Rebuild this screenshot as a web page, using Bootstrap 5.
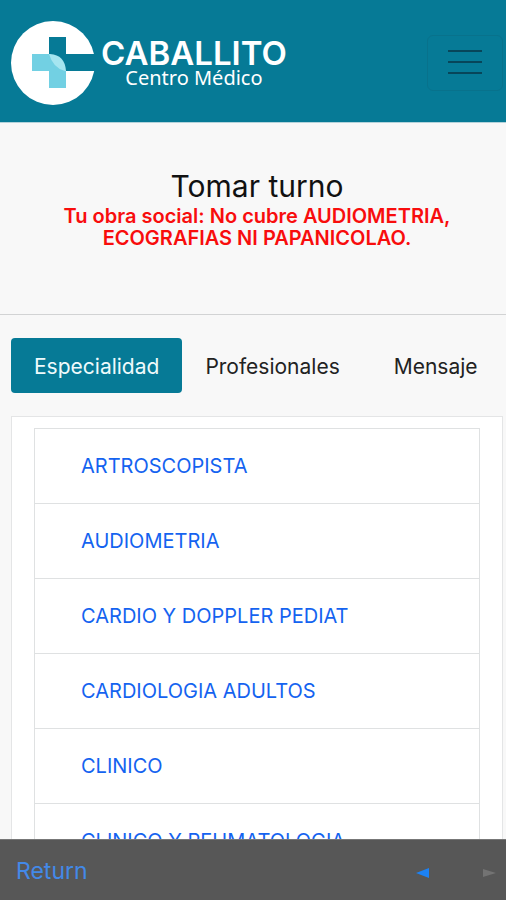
<!DOCTYPE html>
<html lang="es">
<head>
<meta charset="utf-8">
<meta name="viewport" content="width=device-width, initial-scale=1">
<title>Caballito Centro Médico - Tomar turno</title>
<link href="https://cdn.jsdelivr.net/npm/bootstrap@5.3.0/dist/css/bootstrap.min.css" rel="stylesheet">
<style>
  :root { --brand: #067a96; --line: #dfe1e2; }
  body { font-family: Inter, "Liberation Sans", sans-serif; background: #f8f8f8; color: #111; }
  .site-header { background: var(--brand); border-bottom: 1px solid #b4d3db; padding: 20px 3px 16px 10px; }
  .logo-icon { width: 86px; height: 86px; }
  .logo-text { margin-left: 5px; padding-top: 2px; }
  .logo-name { font-family: Inter, sans-serif; font-weight: 600; font-size: 33px; line-height: 28px; }
  .logo-sub { font-family: "Noto Sans", sans-serif; font-size: 20px; line-height: 22px; }
  .menu-btn { padding: 11px 20px; border: 1px solid #08728c; border-radius: 6px; }
  .menu-btn svg { width: 34px; height: 32px; }
  .intro { padding: 45px 44px 65px 52px; border-bottom: 1px solid #d2d3d4; }
  .intro h1 { font-size: 30px; line-height: 36px; font-weight: 400; }
  .notice { color: #f80d0d; font-size: 20px; line-height: 22px; font-weight: 600; padding-top: 1px; }
  .content-area { padding: 23px 3px 0 11px; }
  .nav-pills .nav-link { font-size: 21px; line-height: 33px; padding: 12px 23px 10px; color: #222; border-radius: 4px; }
  .nav-pills .nav-link.active { background: var(--brand); color: #eefafc; }
  .panel { border: 1px solid #e4e5e6; border-radius: 0; margin-top: 23px; padding: 11px 22px; }
  .specialties { --bs-list-group-border-color: var(--line); border-radius: 0; }
  .specialties .list-group-item { font-size: 20px; line-height: 30px; padding: 22px 46px; color: #1463f0; border-radius: 0; }
  .browser-bar { background: #575757; border-top: 1px solid #777; height: 61px; padding: 2px 10px 0 16px; }
  .return-btn { font-size: 23px; line-height: 30px; color: #4389e8; }
  .step-btn svg { width: 14px; height: 10px; }
</style>
<script src="https://cdn.jsdelivr.net/npm/bootstrap@5.3.0/dist/js/bootstrap.bundle.min.js"></script>
</head>
<body>
<div class="vh-100 d-flex flex-column">
  <div class="flex-grow-1 overflow-hidden">
    <header class="site-header d-flex align-items-center justify-content-between">
      <a href="#" class="d-flex align-items-center text-white text-decoration-none">
        <svg class="logo-icon" viewBox="0 0 86 86" aria-hidden="true">
          <circle cx="43" cy="43" r="42" fill="#fff"/>
          <path d="M39 17H56V34H86V51H56L39 34Z" fill="#067a96"/>
          <path d="M22 34H39V51H56V68H39V51H22Z" fill="#72d0e3"/>
          <path d="M39 34H40Q55 35 56 51H39Z" fill="#a5e5f0"/>
          <path d="M39 34V51H55Q43 48 39 34Z" fill="#72d0e3"/>
        </svg>
        <span class="logo-text d-flex flex-column align-items-center">
          <span class="logo-name">CABALLITO</span>
          <span class="logo-sub">Centro Médico</span>
        </span>
      </a>
      <button class="btn menu-btn d-flex" type="button" aria-label="Menú">
        <svg viewBox="0 0 34 32" stroke="#07465a" stroke-width="2" aria-hidden="true"><path d="M0 4H34M0 15H34M0 26H34"/></svg>
      </button>
    </header>
    <main>
      <section class="intro text-center">
        <h1 class="mb-0">Tomar turno</h1>
        <p class="notice mb-0">Tu obra social: No cubre AUDIOMETRIA, ECOGRAFIAS NI PAPANICOLAO.</p>
      </section>
      <section class="content-area">
        <ul class="nav nav-pills flex-nowrap" role="tablist">
          <li class="nav-item" role="presentation"><button class="nav-link active" type="button" role="tab" id="tab-esp" aria-controls="especialidad" aria-selected="true">Especialidad</button></li>
          <li class="nav-item" role="presentation"><button class="nav-link" type="button" role="tab" aria-selected="false">Profesionales</button></li>
          <li class="nav-item ms-2" role="presentation"><button class="nav-link" type="button" role="tab" aria-selected="false">Mensaje</button></li>
        </ul>
        <div class="card panel" id="especialidad" role="tabpanel" aria-labelledby="tab-esp">
          <div class="list-group specialties">
            <a href="#" class="list-group-item">ARTROSCOPISTA</a>
            <a href="#" class="list-group-item">AUDIOMETRIA</a>
            <a href="#" class="list-group-item">CARDIO Y DOPPLER PEDIAT</a>
            <a href="#" class="list-group-item">CARDIOLOGIA ADULTOS</a>
            <a href="#" class="list-group-item">CLINICO</a>
            <a href="#" class="list-group-item">CLINICO Y REUMATOLOGIA</a>
          </div>
        </div>
      </section>
    </main>
  </div>
  <footer class="browser-bar flex-shrink-0 d-flex align-items-center justify-content-between">
    <button class="btn return-btn border-0 p-0" type="button">Return</button>
    <div class="d-flex align-items-center gap-5 pt-1">
      <button class="btn step-btn border-0 p-0 d-flex me-1" type="button" aria-label="Anterior"><svg viewBox="0 0 14 10" fill="#1c82f5"><path d="M0 5L13 0V10Z"/></svg></button>
      <button class="btn step-btn border-0 p-0 d-flex" type="button" aria-label="Siguiente"><svg viewBox="0 0 14 10" fill="#737373"><path d="M14 5L1 1V9Z"/></svg></button>
    </div>
  </footer>
</div>
</body>
</html>
